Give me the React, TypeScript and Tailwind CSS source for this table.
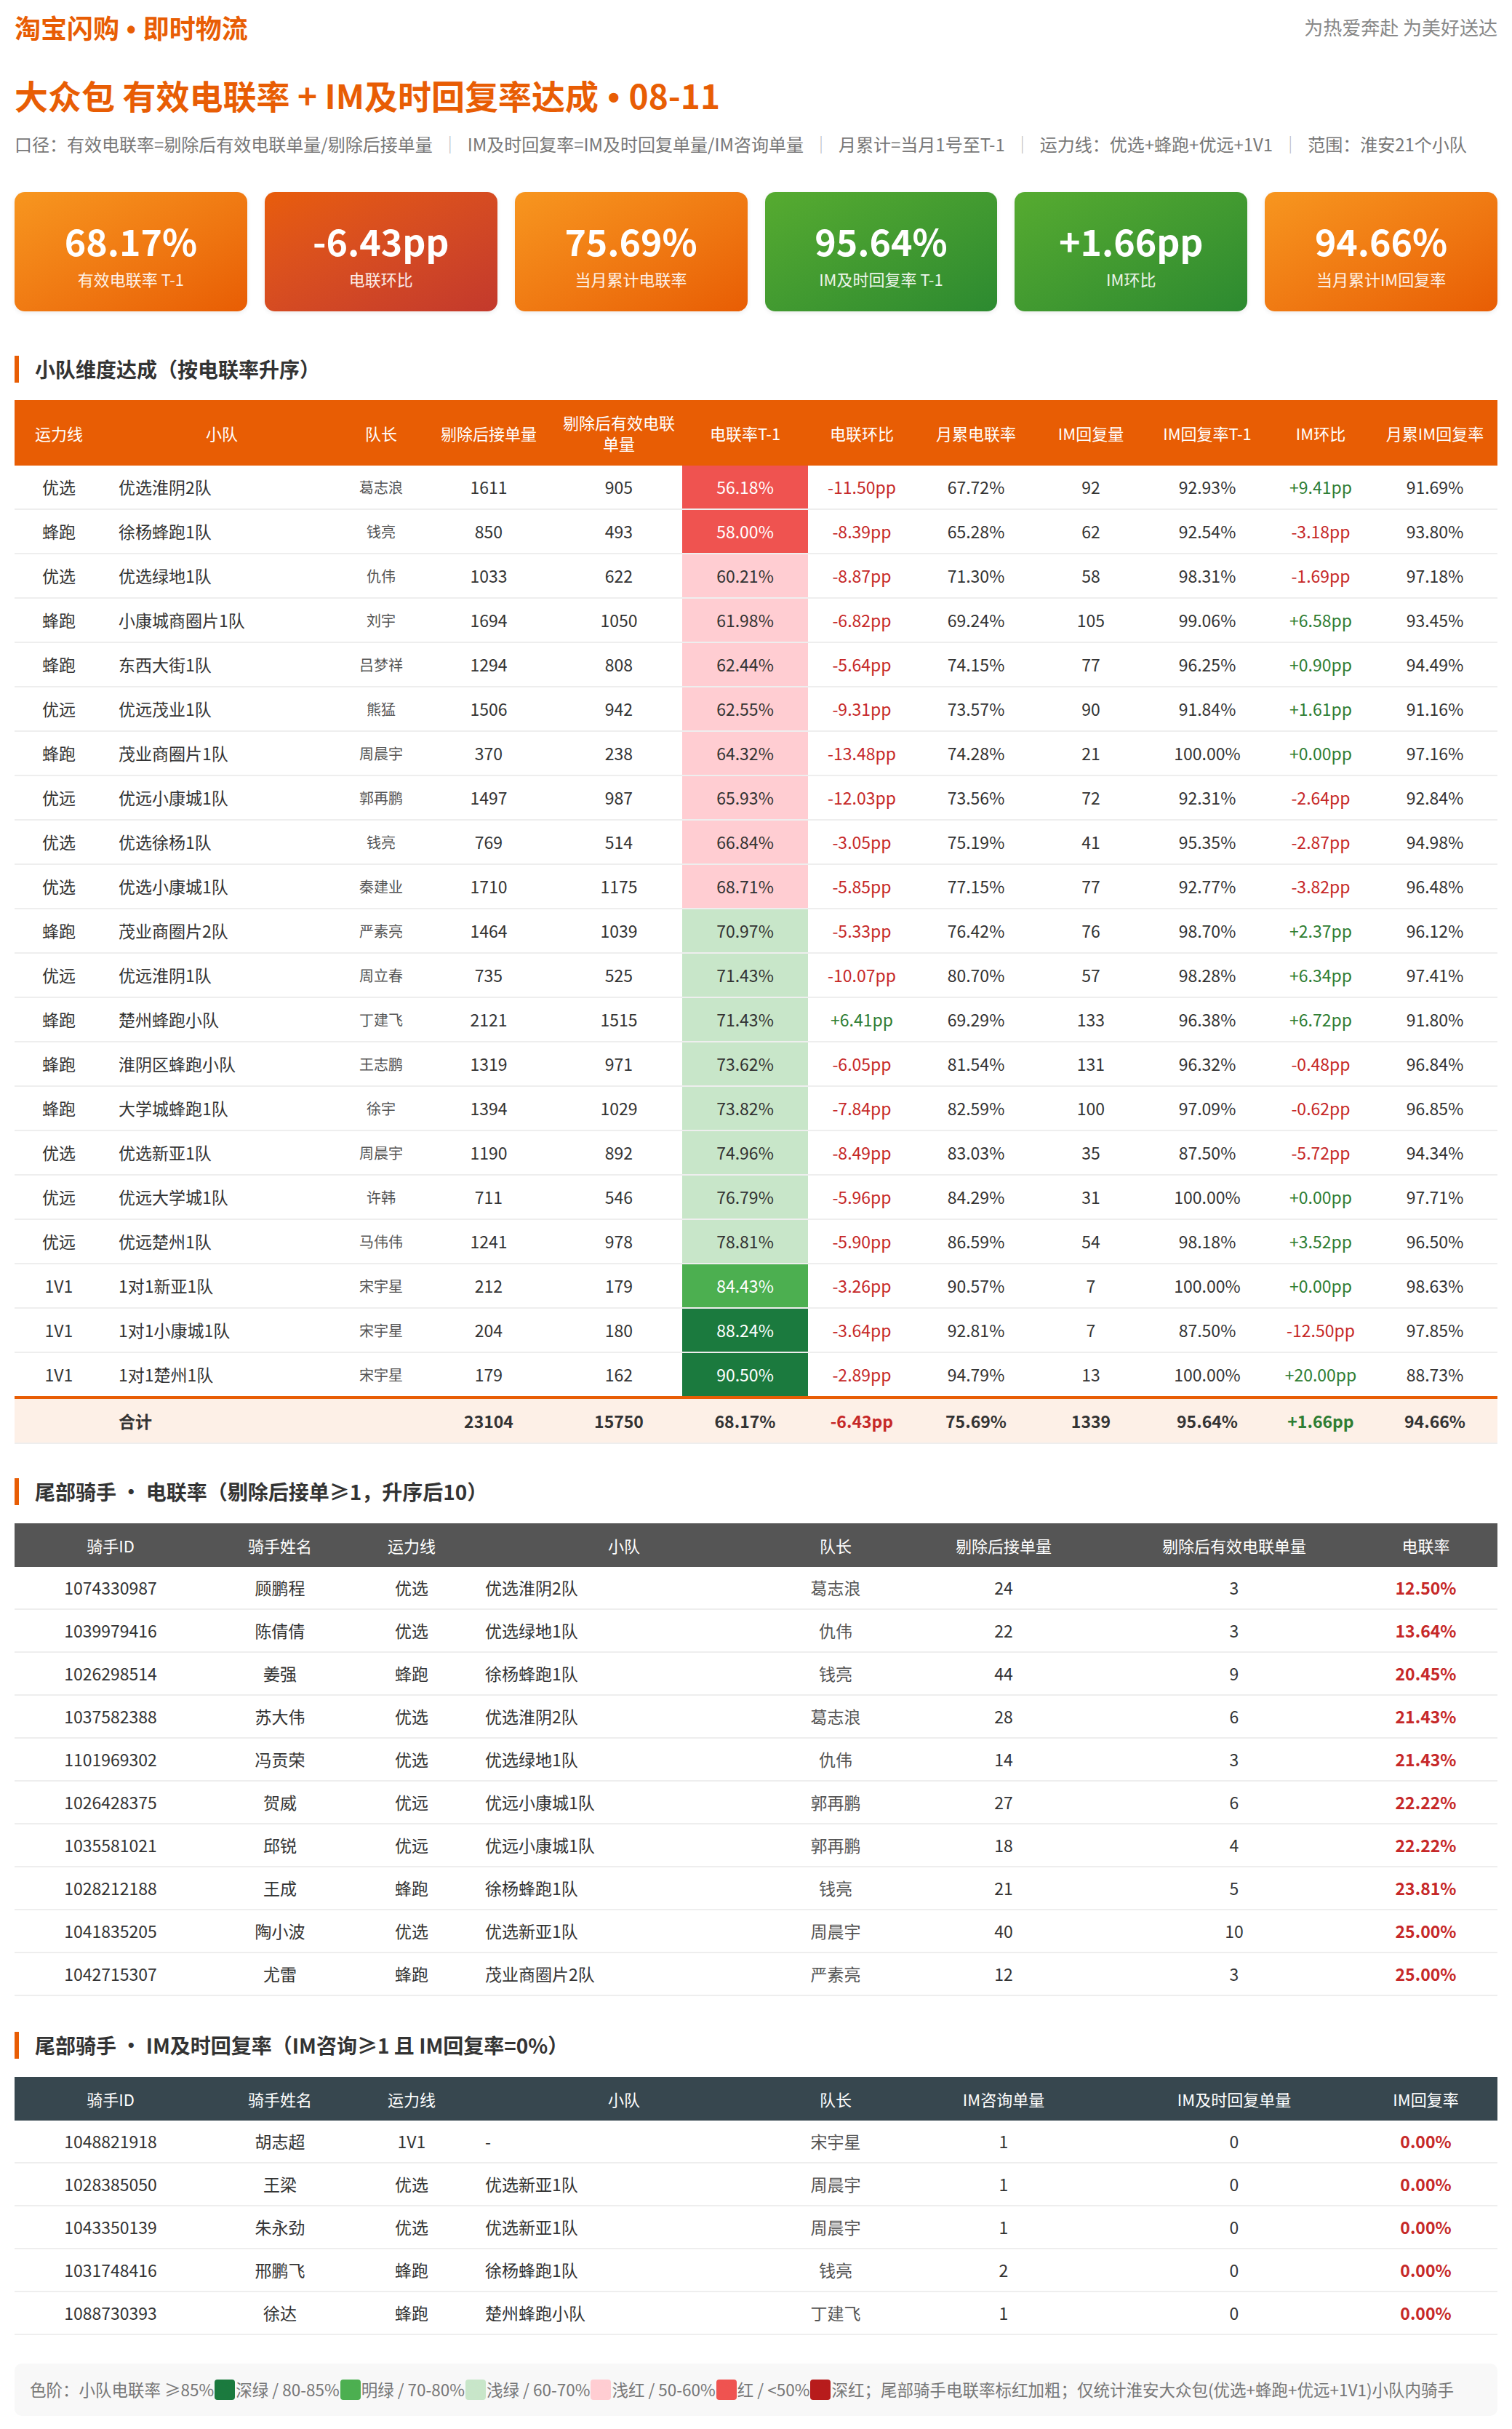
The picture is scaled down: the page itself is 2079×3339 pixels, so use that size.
import React from "react";

type Team = [string, string, string, number, number, number, number, number, number, number, number, number];

const teams: Team[] = [
  ["优选", "优选淮阴2队", "葛志浪", 1611, 905, 56.18, -11.5, 67.72, 92, 92.93, 9.41, 91.69],
  ["蜂跑", "徐杨蜂跑1队", "钱亮", 850, 493, 58.0, -8.39, 65.28, 62, 92.54, -3.18, 93.8],
  ["优选", "优选绿地1队", "仇伟", 1033, 622, 60.21, -8.87, 71.3, 58, 98.31, -1.69, 97.18],
  ["蜂跑", "小康城商圈片1队", "刘宇", 1694, 1050, 61.98, -6.82, 69.24, 105, 99.06, 6.58, 93.45],
  ["蜂跑", "东西大街1队", "吕梦祥", 1294, 808, 62.44, -5.64, 74.15, 77, 96.25, 0.9, 94.49],
  ["优远", "优远茂业1队", "熊猛", 1506, 942, 62.55, -9.31, 73.57, 90, 91.84, 1.61, 91.16],
  ["蜂跑", "茂业商圈片1队", "周晨宇", 370, 238, 64.32, -13.48, 74.28, 21, 100.0, 0.0, 97.16],
  ["优远", "优远小康城1队", "郭再鹏", 1497, 987, 65.93, -12.03, 73.56, 72, 92.31, -2.64, 92.84],
  ["优选", "优选徐杨1队", "钱亮", 769, 514, 66.84, -3.05, 75.19, 41, 95.35, -2.87, 94.98],
  ["优选", "优选小康城1队", "秦建业", 1710, 1175, 68.71, -5.85, 77.15, 77, 92.77, -3.82, 96.48],
  ["蜂跑", "茂业商圈片2队", "严素亮", 1464, 1039, 70.97, -5.33, 76.42, 76, 98.7, 2.37, 96.12],
  ["优远", "优远淮阴1队", "周立春", 735, 525, 71.43, -10.07, 80.7, 57, 98.28, 6.34, 97.41],
  ["蜂跑", "楚州蜂跑小队", "丁建飞", 2121, 1515, 71.43, 6.41, 69.29, 133, 96.38, 6.72, 91.8],
  ["蜂跑", "淮阴区蜂跑小队", "王志鹏", 1319, 971, 73.62, -6.05, 81.54, 131, 96.32, -0.48, 96.84],
  ["蜂跑", "大学城蜂跑1队", "徐宇", 1394, 1029, 73.82, -7.84, 82.59, 100, 97.09, -0.62, 96.85],
  ["优选", "优选新亚1队", "周晨宇", 1190, 892, 74.96, -8.49, 83.03, 35, 87.5, -5.72, 94.34],
  ["优远", "优远大学城1队", "许韩", 711, 546, 76.79, -5.96, 84.29, 31, 100.0, 0.0, 97.71],
  ["优远", "优远楚州1队", "马伟伟", 1241, 978, 78.81, -5.9, 86.59, 54, 98.18, 3.52, 96.5],
  ["1V1", "1对1新亚1队", "宋宇星", 212, 179, 84.43, -3.26, 90.57, 7, 100.0, 0.0, 98.63],
  ["1V1", "1对1小康城1队", "宋宇星", 204, 180, 88.24, -3.64, 92.81, 7, 87.5, -12.5, 97.85],
  ["1V1", "1对1楚州1队", "宋宇星", 179, 162, 90.5, -2.89, 94.79, 13, 100.0, 20.0, 88.73],
];

const riders1: [string, string, string, string, string, number, number, string][] = [
  ["1074330987", "顾鹏程", "优选", "优选淮阴2队", "葛志浪", 24, 3, "12.50%"],
  ["1039979416", "陈倩倩", "优选", "优选绿地1队", "仇伟", 22, 3, "13.64%"],
  ["1026298514", "姜强", "蜂跑", "徐杨蜂跑1队", "钱亮", 44, 9, "20.45%"],
  ["1037582388", "苏大伟", "优选", "优选淮阴2队", "葛志浪", 28, 6, "21.43%"],
  ["1101969302", "冯贡荣", "优选", "优选绿地1队", "仇伟", 14, 3, "21.43%"],
  ["1026428375", "贺威", "优远", "优远小康城1队", "郭再鹏", 27, 6, "22.22%"],
  ["1035581021", "邱锐", "优远", "优远小康城1队", "郭再鹏", 18, 4, "22.22%"],
  ["1028212188", "王成", "蜂跑", "徐杨蜂跑1队", "钱亮", 21, 5, "23.81%"],
  ["1041835205", "陶小波", "优选", "优选新亚1队", "周晨宇", 40, 10, "25.00%"],
  ["1042715307", "尤雷", "蜂跑", "茂业商圈片2队", "严素亮", 12, 3, "25.00%"],
];

const riders2: [string, string, string, string, string, number, number, string][] = [
  ["1048821918", "胡志超", "1V1", "-", "宋宇星", 1, 0, "0.00%"],
  ["1028385050", "王梁", "优选", "优选新亚1队", "周晨宇", 1, 0, "0.00%"],
  ["1043350139", "朱永劲", "优选", "优选新亚1队", "周晨宇", 1, 0, "0.00%"],
  ["1031748416", "邢鹏飞", "蜂跑", "徐杨蜂跑1队", "钱亮", 2, 0, "0.00%"],
  ["1088730393", "徐达", "蜂跑", "楚州蜂跑小队", "丁建飞", 1, 0, "0.00%"],
];

const pct = (v: number) => v.toFixed(2) + "%";
const pp = (v: number) => (v >= 0 ? "+" : "") + v.toFixed(2) + "pp";
const ppColor = (v: number) => (v >= 0 ? "text-[#2e7d32]" : "text-[#c62828]");

function rateCell(v: number) {
  if (v >= 85) return "bg-[#1b7a3e] text-white";
  if (v >= 80) return "bg-[#4caf50] text-white";
  if (v >= 70) return "bg-[#c8e6c9] text-[#333333]";
  if (v >= 60) return "bg-[#ffcdd2] text-[#333333]";
  if (v >= 50) return "bg-[#ef5350] text-white";
  return "bg-[#b71c1c] text-white";
}

const T1 = "grid grid-cols-[122px_326px_112px_184px_174px_173px_148px_166px_150px_170px_142px_1fr]";
const T2 = "grid grid-cols-[264px_202px_160px_424px_158px_304px_330px_1fr]";

function Dot() {
  return <span className="font-['Liberation_Sans',sans-serif] leading-none"> • </span>;
}

function SectionTitle({ children }: { children: React.ReactNode }) {
  return (
    <div className="flex h-[37px] items-center border-l-[6px] border-[#e85d04] pl-[22px] text-[28px] font-bold leading-[37px] text-[#333333]">
      {children}
    </div>
  );
}

function Card({ value, label, tone }: { value: string; label: string; tone: "orange" | "red" | "green" }) {
  const bg =
    tone === "orange"
      ? "bg-linear-to-br from-[#f7961f] to-[#e85d04]"
      : tone === "red"
      ? "bg-linear-to-br from-[#e85d0a] to-[#c3392c]"
      : "bg-linear-to-br from-[#56ab30] to-[#2c8a30]";
  return (
    <div className={`flex h-[164px] flex-col items-center justify-center rounded-[14px] pt-[6px] text-white shadow-[0_2px_6px_rgba(0,0,0,0.08)] ${bg}`}>
      <div className="text-[50px] font-bold leading-[60px]">{value}</div>
      <div className="mt-[8px] text-[22px] leading-[30px] text-white/90">{label}</div>
    </div>
  );
}

function RiderTable({
  rows,
  headers,
  headBg,
}: {
  rows: [string, string, string, string, string, number, number, string][];
  headers: string[];
  headBg: string;
}) {
  return (
    <div>
      <div className={`${T2} h-[60px] items-center text-center text-[22px] text-white ${headBg}`}>
        {headers.map((h) => (
          <div key={h}>{h}</div>
        ))}
      </div>
      {rows.map((r) => (
        <div key={r[0]} className={`${T2} h-[59px] items-center border-b-2 border-[#eeeeee] text-[23px] text-[#333333]`}>
          <div className="text-center">{r[0]}</div>
          <div className="text-center">{r[1]}</div>
          <div className="text-center">{r[2]}</div>
          <div className="pl-[21px] text-left">{r[3]}</div>
          <div className="text-center text-[#555555]">{r[4]}</div>
          <div className="text-center">{r[5]}</div>
          <div className="text-center">{r[6]}</div>
          <div className="text-center font-bold text-[#c62828]">{r[7]}</div>
        </div>
      ))}
    </div>
  );
}

export default function App() {
  const heads1 = ["运力线", "小队", "队长", "剔除后接单量", "剔除后有效电联单量", "电联率T-1", "电联环比", "月累电联率", "IM回复量", "IM回复率T-1", "IM环比", "月累IM回复率"];
  return (
    <div className="bg-white px-[20px] pb-[12px] pt-[14px] font-['Noto_Sans_CJK_SC','Noto_Sans',sans-serif] text-[#333333]">
      <div className="flex h-[46px] items-center justify-between">
        <div className="h-[46px] whitespace-pre text-[36px] font-bold leading-[46px] text-[#e85d04]">
          淘宝闪购<Dot />即时物流
        </div>
        <div className="text-[26px] leading-[46px] text-[#888888]">为热爱奔赴 为美好送达</div>
      </div>

      <div className="mt-[40px] h-[60px] whitespace-pre text-[46px] font-bold leading-[60px] text-[#e85d04]">
        大众包 有效电联率 + IM及时回复率达成<Dot />08-11
      </div>

      <div className="mt-[21px] whitespace-nowrap text-[24px] leading-[34px] text-[#777777]">
        口径：有效电联率=剔除后有效电联单量/剔除后接单量
        <span className="mx-[12px] text-[#bbbbbb]">｜</span>
        IM及时回复率=IM及时回复单量/IM咨询单量
        <span className="mx-[12px] text-[#bbbbbb]">｜</span>
        月累计=当月1号至T-1
        <span className="mx-[12px] text-[#bbbbbb]">｜</span>
        运力线：优选+蜂跑+优远+1V1
        <span className="mx-[12px] text-[#bbbbbb]">｜</span>
        范围：淮安21个小队
      </div>

      <div className="mt-[49px] grid grid-cols-6 gap-[24px]">
        <Card value="68.17%" label="有效电联率 T-1" tone="orange" />
        <Card value="-6.43pp" label="电联环比" tone="red" />
        <Card value="75.69%" label="当月累计电联率" tone="orange" />
        <Card value="95.64%" label="IM及时回复率 T-1" tone="green" />
        <Card value="+1.66pp" label="IM环比" tone="green" />
        <Card value="94.66%" label="当月累计IM回复率" tone="orange" />
      </div>

      <div className="mt-[61px]">
        <SectionTitle>小队维度达成（按电联率升序）</SectionTitle>
      </div>

      <div className="mt-[24px]">
        <div className={`${T1} h-[90px] items-center bg-[#e85d04] text-center text-[22px] leading-[29px] text-white`}>
          {heads1.map((h) => (
            <div key={h} className="px-[8px]">
              {h}
            </div>
          ))}
        </div>
        {teams.map((t, i) => (
          <div
            key={t[1]}
            className={`${T1} ${i === teams.length - 1 ? "h-[59px]" : "h-[61px] border-b-2 border-[#eeeeee]"} items-stretch text-[23px] text-[#333333]`}
          >
            <div className="flex items-center justify-center">{t[0]}</div>
            <div className="flex items-center pl-[21px]">{t[1]}</div>
            <div className="flex items-center justify-center text-[20px] text-[#555555]">{t[2]}</div>
            <div className="flex items-center justify-center">{t[3]}</div>
            <div className="flex items-center justify-center">{t[4]}</div>
            <div className={`flex items-center justify-center ${rateCell(t[5])}`}>{pct(t[5])}</div>
            <div className={`flex items-center justify-center ${ppColor(t[6])}`}>{pp(t[6])}</div>
            <div className="flex items-center justify-center">{pct(t[7])}</div>
            <div className="flex items-center justify-center">{t[8]}</div>
            <div className="flex items-center justify-center">{pct(t[9])}</div>
            <div className={`flex items-center justify-center ${ppColor(t[10])}`}>{pp(t[10])}</div>
            <div className="flex items-center justify-center">{pct(t[11])}</div>
          </div>
        ))}
        <div className={`${T1} h-[66px] items-center border-y-4 border-t-[#e85d04] border-b-[#eeeeee] border-b-2 bg-[#fdf0e7] text-center text-[23px] font-bold text-[#333333]`}>
          <div></div>
          <div className="pl-[21px] text-left">合计</div>
          <div></div>
          <div>23104</div>
          <div>15750</div>
          <div>68.17%</div>
          <div className="text-[#c62828]">-6.43pp</div>
          <div>75.69%</div>
          <div>1339</div>
          <div>95.64%</div>
          <div className="text-[#2e7d32]">+1.66pp</div>
          <div>94.66%</div>
        </div>
      </div>

      <div className="mt-[47px]">
        <SectionTitle>尾部骑手 · 电联率（剔除后接单≥1，升序后10）</SectionTitle>
      </div>
      <div className="mt-[25px]">
        <RiderTable
          rows={riders1}
          headBg="bg-[#555555]"
          headers={["骑手ID", "骑手姓名", "运力线", "小队", "队长", "剔除后接单量", "剔除后有效电联单量", "电联率"]}
        />
      </div>

      <div className="mt-[49px]">
        <SectionTitle>尾部骑手 · IM及时回复率（IM咨询≥1 且 IM回复率=0%）</SectionTitle>
      </div>
      <div className="mt-[25px]">
        <RiderTable
          rows={riders2}
          headBg="bg-[#37474f]"
          headers={["骑手ID", "骑手姓名", "运力线", "小队", "队长", "IM咨询单量", "IM及时回复单量", "IM回复率"]}
        />
      </div>

      <div className="mt-[39px] flex h-[72px] items-center whitespace-nowrap rounded-[10px] bg-[#f8f8f8] px-[21px] text-[22.5px] text-[#777777]">
        <span>色阶：小队电联率 ≥85%</span>
        <span className="mx-[1px] inline-block h-[28px] w-[28px] rounded-[4px] bg-[#1b7a3e]"></span>
        <span>深绿 / 80-85%</span>
        <span className="mx-[1px] inline-block h-[28px] w-[28px] rounded-[4px] bg-[#4caf50]"></span>
        <span>明绿 / 70-80%</span>
        <span className="mx-[1px] inline-block h-[28px] w-[28px] rounded-[4px] bg-[#c8e6c9]"></span>
        <span>浅绿 / 60-70%</span>
        <span className="mx-[1px] inline-block h-[28px] w-[28px] rounded-[4px] bg-[#ffcdd2]"></span>
        <span>浅红 / 50-60%</span>
        <span className="mx-[1px] inline-block h-[28px] w-[28px] rounded-[4px] bg-[#ef5350]"></span>
        <span>红 / &lt;50%</span>
        <span className="mx-[1px] inline-block h-[28px] w-[28px] rounded-[4px] bg-[#b71c1c]"></span>
        <span>深红；尾部骑手电联率标红加粗；仅统计淮安大众包(优选+蜂跑+优远+1V1)小队内骑手</span>
      </div>
    </div>
  );
}
